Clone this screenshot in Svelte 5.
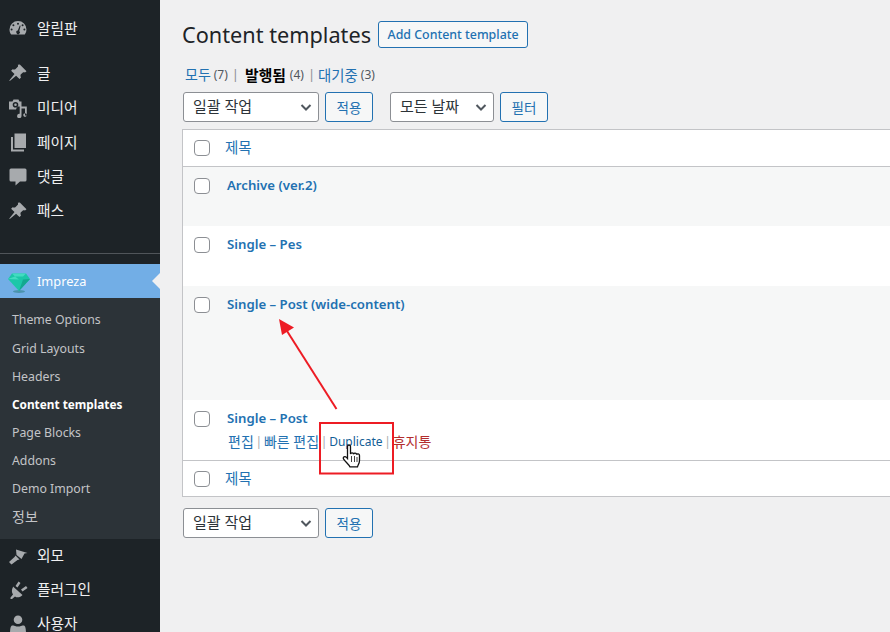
<script>
  const icons = {
    gauge: 'M10 3a8.500 8.500 0 0 0-8.500 8.500c0 1.900.6 3.600 1.700 5h13.600a8.400 8.400 0 0 0 1.700-5A8.500 8.500 0 0 0 10 3zM10 4.800a1 1 0 1 1 0 2 1 1 0 0 1 0-2zM5.400 6.200a1 1 0 1 1 0 2 1 1 0 0 1 0-2zM14.600 6.200a1 1 0 1 1 0 2 1 1 0 0 1 0-2zM3.600 10.600a1 1 0 1 1 0 2 1 1 0 0 1 0-2zM16.400 10.600a1 1 0 1 1 0 2 1 1 0 0 1 0-2zM11.800 7.400l.8.3-1.300 5.300a1.800 1.800 0 1 1-1.500-.4z',
    pin: 'M11.800 1.500l6.700 6.700-1.500 1.200c-.8-.3-1.600-.4-2.100 0l-2.200 2.200c-.4.700-.2 2 .3 3l-1.500 1.500-3.400-3.400-6.300 5.200-.5-.5 5.200-6.300-3.400-3.400 1.500-1.500c1 .5 2.300.7 3-.3l2.200-2.100c.4-.5.3-1.400 0-2.100z',
    media: 'M1 3.500h3.500l1-2h5l1 2h2v5h-3.300a4 4 0 0 0-2.200 3H1zM7.500 4a2.800 2.800 0 1 0 0 5.600 2.800 2.800 0 0 0 0-5.600zM7.500 5.500a1.300 1.300 0 1 1 0 2.600 1.300 1.300 0 0 1 0-2.600zM18.800 8.500v9h-1.800v-7h-3.500v7.500a2.200 2.200 0 1 1-1.800-2.200V8.500zM17 15.300a1.800 1.800 0 1 1-1.800 1.800A1.800 1.800 0 0 1 17 15.300z',
    pages: 'M6.500 1.500h11.500v14.500H6.500zM3 5h2v12.500h11v2H3z',
    comment: 'M3 2.500h14a1.500 1.500 0 0 1 1.500 1.500v10a1.500 1.500 0 0 1-1.500 1.500h-5l-4.500 4v-4H3A1.500 1.500 0 0 1 1.500 14V4A1.500 1.500 0 0 1 3 2.500z',
    brush: 'M8 3.500l11.500 3.500-3 .5-3 5.500L8.500 9zM7.500 9.500l4 4-2 .5-6 4.500L1 16l5.500-5z',
    plug: 'M10.500 1.500l2 1.500-3 4.500-2-1.500zM18 6l1.500 2-5 3.500-1.500-2zM5 6.500l9.500 8.500c-2 2.500-5.500 3-7.500 1.500l-3 2.500H2.500v-1.500l2.500-3c-1.500-2-1.500-5 0-7.500z',
    user: 'M10 1.500a4.300 4.300 0 1 1 0 8.600 4.300 4.300 0 0 1 0-8.600zM4 11.500c1 0 1.800 0 3 .5a8 8 0 0 0 6 0c1.200-.5 2-.5 3-.5 1 0 2 2.500 2 8H2c0-5.500 1-8 2-8z'
  };
  const topMenu = [
    { label: '글', icon: 'pin' },
    { label: '미디어', icon: 'media' },
    { label: '페이지', icon: 'pages' },
    { label: '댓글', icon: 'comment' },
    { label: '패스', icon: 'pin' }
  ];
  const subMenu = ['Theme Options', 'Grid Layouts', 'Headers', 'Content templates', 'Page Blocks', 'Addons', 'Demo Import', '정보'];
  const bottomMenu = [
    { label: '외모', icon: 'brush' },
    { label: '플러그인', icon: 'plug' },
    { label: '사용자', icon: 'user' }
  ];
  const rows = [
    { title: 'Archive (ver.2)', cls: 'alt h59' },
    { title: 'Single – Pes', cls: 'h60' },
    { title: 'Single – Post (wide-content)', cls: 'alt h114' }
  ];
</script>

<div class="wrap">
  <nav class="side">
    <a class="item first"><svg viewBox="0 0 20 20"><path fill-rule="evenodd" d={icons.gauge} /></svg><span>알림판</span></a>
    <div class="sep-gap"></div>
    {#each topMenu as m}
      <a class="item"><svg viewBox="0 0 20 20"><path fill-rule="evenodd" d={icons[m.icon]} /></svg><span>{m.label}</span></a>
    {/each}
    <div class="divider"></div>
    <a class="item current">
      <svg class="gem" viewBox="0 0 24 24">
        <ellipse cx="12" cy="21.500" rx="6" ry="1.500" fill="#4b93ad" />
        <path d="M5 3.500h14l4 5.500-11 12L1 9z" fill="#1cc7a8" />
        <path d="M5 3.500h14l-3 3H8zM1 9l7-2.500 4 3-11-.5z" fill="#42dcc0" />
        <path d="M12 21l4-11.500L23 9z" fill="#14a890" />
      </svg>
      <span>Impreza</span>
    </a>
    <ul class="sub">
      {#each subMenu as s}
        <li class:on={s === 'Content templates'} class:ko={s === '정보'}>{s}</li>
      {/each}
    </ul>
    {#each bottomMenu as m}
      <a class="item low"><svg viewBox="0 0 20 20"><path d={icons[m.icon]} /></svg><span>{m.label}</span></a>
    {/each}
  </nav>

  <main>
    <div class="head">
      <h1>Content templates</h1>
      <button class="add">Add Content template</button>
    </div>
    <div class="views">
      <a>모두</a><i>(7)</i><b class="bar">|</b><strong>발행됨</strong><i>(4)</i><b class="bar second">|</b><a class="wait">대기중</a><i>(3)</i>
    </div>
    <div class="filters">
      <div class="select wide">일괄 작업<svg viewBox="0 0 16 16"><path d="M3.500 6l4.500 4.500L12.500 6" /></svg></div>
      <button class="btn">적용</button>
      <div class="select date">모든 날짜<svg viewBox="0 0 16 16"><path d="M3.500 6l4.500 4.500L12.500 6" /></svg></div>
      <button class="btn">필터</button>
    </div>

    <div class="table">
      <div class="row th"><span class="check"></span><a class="col">제목</a></div>
      {#each rows as r}
        <div class="row {r.cls}"><span class="check"></span><a class="title">{r.title}</a></div>
      {/each}
      <div class="row last">
        <span class="check"></span>
        <div>
          <a class="title">Single – Post</a>
          <div class="actions"><a>편집</a><b class="bar">|</b><a>빠른 편집</a><b class="bar">|</b><a class="dup">Duplicate</a><b class="bar">|</b><a class="trash">휴지통</a></div>
        </div>
      </div>
      <div class="row tf"><span class="check"></span><a class="col">제목</a></div>
    </div>

    <div class="filters bottom">
      <div class="select wide">일괄 작업<svg viewBox="0 0 16 16"><path d="M3.500 6l4.500 4.500L12.500 6" /></svg></div>
      <button class="btn">적용</button>
    </div>
  </main>

  <!-- screenshot annotations -->
  <svg class="notes" width="890" height="632" viewBox="0 0 890 632">
    <path d="M336.500 409L287 331" stroke="#ed1c24" stroke-width="2" fill="none" />
    <path d="M279 319l15 8.500-12 7.500z" fill="#ed1c24" />
    <rect x="320" y="423" width="73" height="50.500" fill="none" stroke="#ed1c24" stroke-width="2" />
    <g transform="translate(1 1)">
      <path d="M346.500 445.500c0-2 3-2 3 0v7.500c.5-1.700 3-1.500 3 .2.500-1.500 3-1.300 3 .4.600-1.200 3-.9 3 .8v5c0 3-1.500 4.500-2 6.500h-7.500c-1-2.500-5-5.500-6.500-8-1-2 1.500-3 3-1.500l1 1.100z" fill="#fff" stroke="#111" stroke-width="1.300" />
      <path d="M350.500 455v6M353.500 455v6M356 456v5" stroke="#111" stroke-width=".8" />
    </g>
  </svg>
</div>

<style>
  :global(body) {
    margin: 0;
    background: #f0f0f1;
    overflow: hidden;
  }
  .wrap {
    position: relative;
    display: flex;
    width: 890px;
    height: 632px;
    overflow: hidden;
    font-family: "Noto Sans", "Noto Sans CJK KR", sans-serif;
    font-size: 13px;
    color: #3c434a;
  }
  .side {
    width: 160px;
    flex: none;
    height: 632px;
    background: #1d2327;
    overflow: hidden;
  }
  .item {
    display: flex;
    align-items: center;
    height: 34.3px;
    color: #f0f0f1;
    font-size: 14.7px;
  }
  .item span { padding-bottom: 2px; }
  .item.low { height: 34px; }
  .item.low span { padding-bottom: 3px; }
  .item.first { margin-top: 11px; }
  .sep-gap { height: 11px; }
  .item svg {
    width: 20px;
    height: 20px;
    margin-left: 8px;
    margin-right: 9px;
    fill: #a7aaad;
    flex: none;
  }
  .divider {
    height: 1px;
    background: #50555a;
    margin-top: 25.200px;
    margin-bottom: 10px;
  }
  .item.current {
    position: relative;
    height: 34px;
    background: #72aee6;
    color: #fff;
    font-size: 12.800px;
  }
  .item.current span { padding-bottom: 0; }
  .item.current::after {
    content: "";
    position: absolute;
    right: 0;
    top: 9px;
    border: 8px solid transparent;
    border-right-color: #f0f0f1;
    border-left-width: 0;
  }
  .item svg.gem {
    width: 24px;
    height: 24px;
    margin-left: 7px;
    margin-right: 6px;
    margin-top: 2px;
  }
  .sub {
    list-style: none;
    margin: 0;
    padding: 8px 0 8px;
    background: #2c3338;
    color: #c3c4c7;
  }
  .sub li {
    height: 28px;
    line-height: 27px;
    padding-left: 12px;
    font-size: 12.300px;
    white-space: nowrap;
  }
  .sub li:first-child { height: 29px; }
  .sub li.on {
    color: #fff;
    font-weight: 700;
    font-size: 11.800px;
  }
  .sub li.ko { font-size: 14px; }
  main {
    flex: 1;
    min-width: 0;
    padding-left: 22px;
  }
  .head {
    display: flex;
    align-items: center;
    gap: 7px;
    height: 27px;
    margin-top: 21px;
  }
  h1 {
    margin: 0;
    font-size: 21.700px;
    font-weight: 400;
    color: #1d2327;
    line-height: 27px;
  }
  .add {
    height: 27px;
    width: 150px;
    padding: 0;
    border: 1px solid #2271b1;
    border-radius: 3px;
    background: #f6f7f7;
    color: #2271b1;
    font: 500 12.400px "Noto Sans", sans-serif;
  }
  .views {
    display: flex;
    align-items: center;
    margin: 17px 0 0 3px;
    height: 18px;
    font-size: 14px;
    white-space: nowrap;
  }
  a { color: #2271b1; }
  .views i {
    font-style: normal;
    color: #50575e;
    font-size: 12px;
    margin-left: 3px;
  }
  .views .wait { font-size: 14.400px; }
  .views strong {
    color: #000;
    font-weight: 600;
    font-size: 14.800px;
    margin: 0 1px;
  }
  .bar {
    font-weight: 400;
    color: #a7aaad;
  }
  .views .bar {
    color: #8c8f94;
    font-size: 13px;
    margin: 0 5px 0 4px;
  }
  .views .bar.second { margin-right: 3px; }
  .filters {
    display: flex;
    gap: 6px;
    margin: 9px 0 0 1px;
    height: 30px;
  }
  .filters .date { margin-left: 11px; width: 104px; }
  .select {
    position: relative;
    box-sizing: border-box;
    width: 136px;
    height: 30px;
    line-height: 26px;
    padding-left: 9px;
    border: 1px solid #8c8f94;
    border-radius: 3px;
    background: #fff;
    color: #2c3338;
    font-size: 15px;
  }
  .select svg {
    position: absolute;
    right: 4px;
    top: 6px;
    width: 16px;
    height: 16px;
    fill: none;
    stroke: #50575e;
    stroke-width: 2;
  }
  .btn {
    box-sizing: border-box;
    width: 48px;
    height: 30px;
    padding: 0;
    border: 1px solid #2271b1;
    border-radius: 3px;
    background: #f6f7f7;
    color: #2271b1;
    font: 400 13.500px "Noto Sans", "Noto Sans CJK KR", sans-serif;
  }
  .table {
    margin-top: 7px;
    background: #fff;
    border: 1px solid #c3c4c7;
    border-right: 0;
    box-sizing: border-box;
    height: 368px;
  }
  .row {
    display: flex;
    box-sizing: border-box;
    padding-left: 11px;
  }
  .check {
    box-sizing: border-box;
    width: 16px;
    height: 16px;
    margin-right: 8px;
    border: 1px solid #8c8f94;
    border-radius: 4px;
    background: #fff;
    flex: none;
  }
  .th {
    height: 37px;
    align-items: center;
    border-bottom: 1px solid #c3c4c7;
  }
  .tf {
    height: 36px;
    align-items: center;
    border-top: 1px solid #c3c4c7;
  }
  .col { margin-left: 7px; font-size: 14.500px; padding-bottom: 3px; }
  .alt { background: #f6f7f7; }
  .h59 { height: 59px; padding-top: 11px; }
  .h60 { height: 60px; padding-top: 11px; }
  .h114 { height: 114px; padding-top: 11px; }
  .last { height: 60px; padding-top: 11px; }
  .title {
    margin-left: 9px;
    font-weight: 600;
    font-size: 13.200px;
    line-height: 15px;
    white-space: nowrap;
  }
  .last .title { display: block; }
  .actions {
    display: flex;
    align-items: center;
    margin: 8px 0 0 10px;
    font-size: 14px;
    line-height: 15px;
    white-space: nowrap;
  }
  .actions .bar { font-size: 12px; margin: 0 1.750px; }
  .dup { font-size: 12px; color: #135e96; }
  .trash { color: #b32d2e; }
  .bottom { margin-top: 11px; }
  .notes {
    position: absolute;
    left: 0;
    top: 0;
    pointer-events: none;
  }
</style>
